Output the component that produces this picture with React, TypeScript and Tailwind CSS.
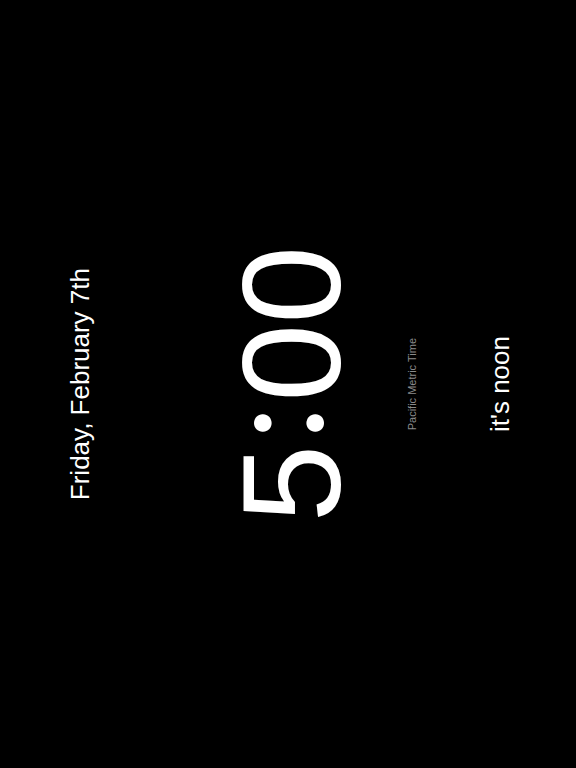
export default function App() {
  return (
    <div className="flex h-[768px] w-[576px] items-center bg-black font-['Liberation_Sans',Arial,sans-serif] text-white">
      <div className="ml-[67px] rotate-180 text-[26px] leading-none whitespace-nowrap [writing-mode:vertical-rl]">
        Friday, February 7th
      </div>
      <div className="ml-[129px] rotate-180 text-[140px] leading-none whitespace-nowrap [writing-mode:vertical-rl]">
        5<span className="relative left-[23px] mx-[4px] font-['Lato',sans-serif]">:</span>00
      </div>
      <div className="ml-[45px] rotate-180 text-[11px] leading-none whitespace-nowrap text-[#8a8a8a] [writing-mode:vertical-rl]">
        Pacific Metric Time
      </div>
      <div className="ml-[69px] rotate-180 text-[26px] leading-none whitespace-nowrap [writing-mode:vertical-rl]">
        it's noon
      </div>
    </div>
  );
}
